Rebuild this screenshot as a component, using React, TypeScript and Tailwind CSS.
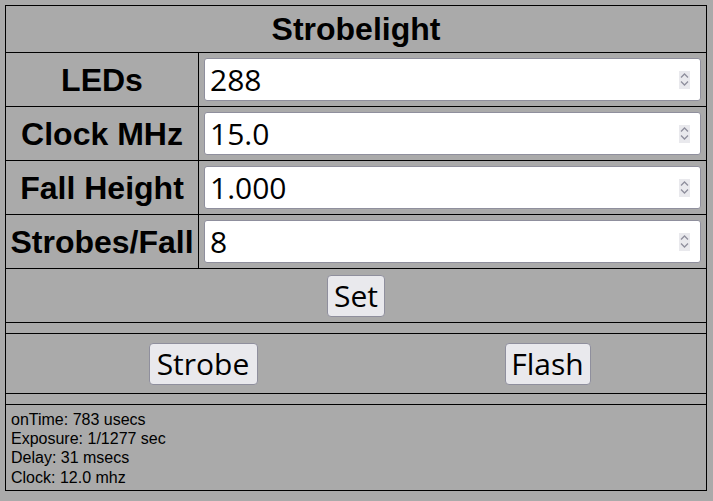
import React from 'react';

const labelFont = { fontFamily: '"Liberation Sans", Arial, sans-serif' };
const uiFont = { fontFamily: '"Open Sans", "DejaVu Sans", sans-serif' };

function Spinner() {
  return (
    <div className="mr-[10px] flex h-[18px] w-[11px] flex-col items-center justify-center gap-[3px] bg-[#e9e9ed]">
      <svg width="9" height="5" viewBox="0 0 9 5" fill="none">
        <path d="M1 4.5 L4.5 1 L8 4.5" stroke="#8f8f9d" strokeWidth="1.3" />
      </svg>
      <svg width="9" height="5" viewBox="0 0 9 5" fill="none">
        <path d="M1 0.5 L4.5 4 L8 0.5" stroke="#8f8f9d" strokeWidth="1.3" />
      </svg>
    </div>
  );
}

function FieldRow({ label, value }: { label: string; value: string }) {
  return (
    <div className="grid h-[54px] grid-cols-[193px_1fr] border-t border-black">
      <div
        className="flex items-center justify-center border-r border-black text-[32px] font-bold text-black"
        style={labelFont}
      >
        {label}
      </div>
      <div className="p-[5px]">
        <div className="flex h-[43px] items-center rounded-[3px] border border-[#8f8f9d] bg-white">
          <input
            type="text"
            defaultValue={value}
            className="min-w-0 flex-1 bg-transparent pl-[5px] text-[30px] text-black outline-none"
            style={uiFont}
          />
          <Spinner />
        </div>
      </div>
    </div>
  );
}

function Btn({ children, w }: { children: React.ReactNode; w: string }) {
  return (
    <button
      className={`flex h-[42px] items-center justify-center rounded-[4px] border border-[#8f8f9d] bg-[#e9e9ed] text-[30px] leading-[40px] text-black ${w}`}
      style={uiFont}
    >
      {children}
    </button>
  );
}

export default function App() {
  return (
    <div className="min-h-[501px] w-full bg-[#aaaaaa] pl-[5px] pt-[5px]">
      <div className="w-[702px] border border-black">
        {/* Title */}
        <div
          className="flex h-[46px] items-center justify-center text-[32px] font-bold text-black"
          style={labelFont}
        >
          Strobelight
        </div>

        <FieldRow label="LEDs" value="288" />
        <FieldRow label="Clock MHz" value="15.0" />
        <FieldRow label="Fall Height" value="1.000" />
        <FieldRow label="Strobes/Fall" value="8" />

        {/* Set */}
        <div className="flex h-[54px] items-center justify-center border-t border-black">
          <Btn w="w-[58px]">Set</Btn>
        </div>

        <div className="h-[11px] border-t border-black" />

        {/* Strobe / Flash */}
        <div className="grid h-[60px] grid-cols-[394px_295px] items-center border-t border-black">
          <div className="flex justify-center">
            <Btn w="w-[109px]">Strobe</Btn>
          </div>
          <div className="flex justify-center">
            <Btn w="w-[86px]">Flash</Btn>
          </div>
        </div>

        <div className="h-[11px] border-t border-black" />

        {/* Status */}
        <div
          className="h-[86px] border-t border-black pl-[5px] pt-[5px] text-[16px] leading-[19.2px] text-black"
          style={labelFont}
        >
          <div>onTime: 783 usecs</div>
          <div>Exposure: 1/1277 sec</div>
          <div>Delay: 31 msecs</div>
          <div>Clock: 12.0 mhz</div>
        </div>
      </div>
    </div>
  );
}
